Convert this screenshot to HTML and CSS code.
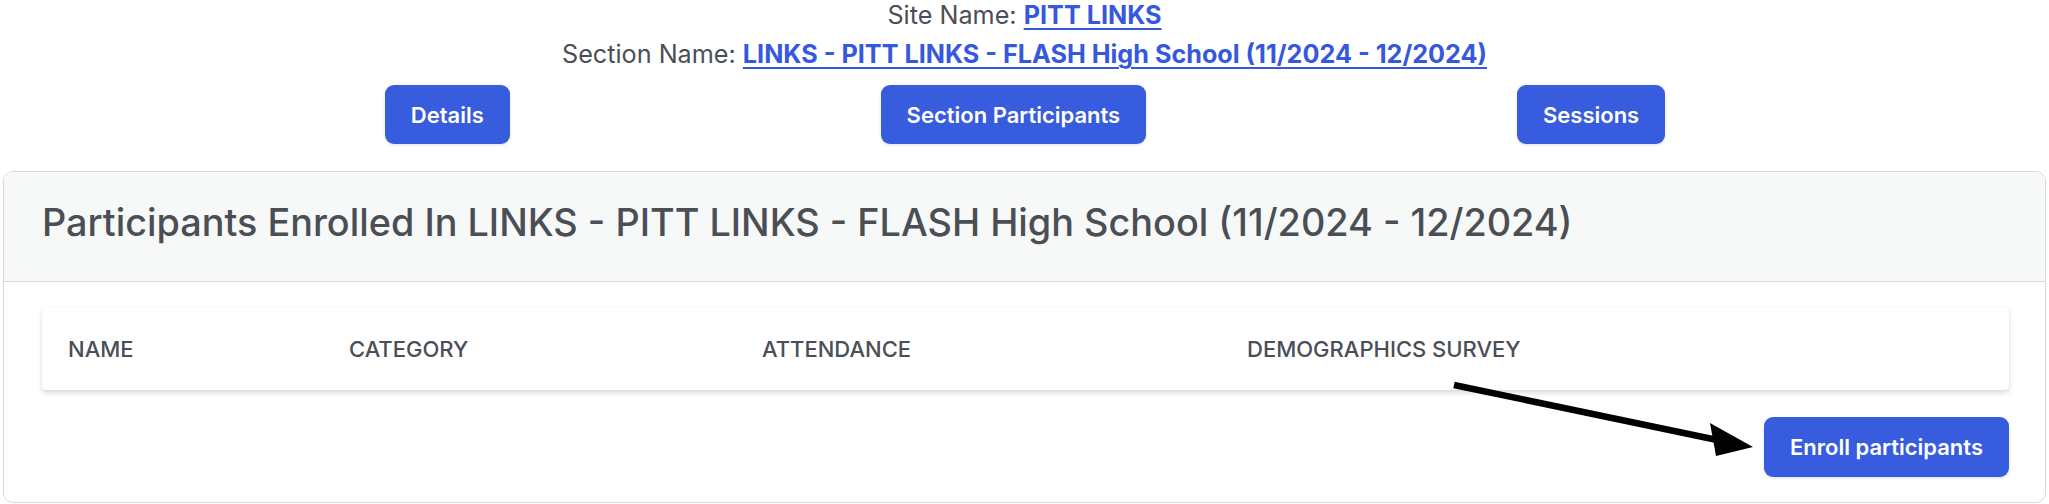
FILE: index.html
```html
<!DOCTYPE html>
<html lang="en">
<head>
<meta charset="utf-8">
<title>Participants Enrolled</title>
<link rel="stylesheet" href="styles.css">
</head>
<body>
<div class="page">
  <div class="meta">
    <p class="meta-line">Site Name: <a class="meta-link" href="#">PITT LINKS</a></p>
    <p class="meta-line meta-line--second">Section Name: <a class="meta-link" href="#">LINKS - PITT LINKS - FLASH High School (11/2024 - 12/2024)</a></p>
  </div>
  <nav class="tabs">
    <button class="btn" type="button">Details</button>
    <button class="btn" type="button">Section Participants</button>
    <button class="btn" type="button">Sessions</button>
  </nav>
  <section class="card">
    <header class="card-header">
      <h1 class="card-title">Participants Enrolled In LINKS - PITT LINKS - FLASH High School (11/2024 - 12/2024)</h1>
    </header>
    <div class="card-body">
      <div class="table-wrap">
        <table class="table">
          <colgroup>
            <col class="col-name">
            <col class="col-category">
            <col class="col-attendance">
            <col class="col-survey">
          </colgroup>
          <thead>
            <tr>
              <th>Name</th>
              <th>Category</th>
              <th>Attendance</th>
              <th>Demographics Survey</th>
            </tr>
          </thead>
        </table>
      </div>
      <div class="actions">
        <button class="btn btn--tall" type="button">Enroll participants</button>
      </div>
    </div>
  </section>
  <svg class="annotation" width="2049" height="504" viewBox="0 0 2049 504" aria-hidden="true">
    <line x1="1454" y1="385" x2="1722" y2="441" stroke="#000" stroke-width="6.5" stroke-linecap="butt"/>
    <polygon points="1753,447 1710,423 1716,456" fill="#000"/>
  </svg>
</div>
</body>
</html>
```

FILE: styles.css
```css
* {
  box-sizing: border-box;
}

html, body {
  margin: 0;
  padding: 0;
  background: #ffffff;
}

body {
  font-family: Inter, "Noto Sans", "Liberation Sans", sans-serif;
  color: #4a4f57;
}

.page {
  position: relative;
  width: 2049px;
  height: 504px;
  padding: 0 3px;
  overflow: hidden;
}

.meta {
  display: flex;
  flex-direction: column;
  align-items: center;
  gap: 9px;
}

.meta-line {
  margin: 0;
  font-size: 25.2px;
  line-height: 30px;
  color: #4a4f57;
  white-space: nowrap;
}

.meta-link {
  color: #3558dc;
  font-weight: 700;
  text-decoration: underline;
  text-decoration-thickness: 2px;
  text-underline-offset: 4px;
}

.tabs {
  display: flex;
  justify-content: space-evenly;
  padding: 16px 10px 0 11px;
}

.btn {
  display: inline-flex;
  align-items: center;
  justify-content: center;
  height: 59px;
  padding: 0 26px;
  border: none;
  border-radius: 9px;
  background: #375cdd;
  color: #ffffff;
  font-family: Inter, "Noto Sans", "Liberation Sans", sans-serif;
  font-size: 22px;
  font-weight: 600;
  box-shadow: 0 1px 3px rgba(0, 0, 0, 0.12);
  cursor: pointer;
}

.btn--tall {
  height: 60px;
}

.card {
  margin-top: 27px;
  border: 1.5px solid #d6d9dc;
  border-radius: 10px;
  overflow: hidden;
  background: #ffffff;
}

.card-header {
  height: 110px;
  display: flex;
  align-items: center;
  padding: 0 38px 9px;
  background: #f7f8f8;
  border-bottom: 1.5px solid #d6d9dc;
}

.card-title {
  margin: 0;
  font-size: 37.8px;
  font-weight: 500;
  color: #4a4f55;
  white-space: nowrap;
}

.card-body {
  padding: 25px 36px 25px 38px;
  display: flex;
  flex-direction: column;
  gap: 27px;
}

.table-wrap {
  border-radius: 4px;
  background: #ffffff;
  box-shadow: 0 3px 5px rgba(0, 0, 0, 0.14), 0 0 2px rgba(0, 0, 0, 0.06);
}

.table {
  width: 100%;
  border-collapse: collapse;
  table-layout: fixed;
}

.col-name { width: 281px; }
.col-category { width: 413px; }
.col-attendance { width: 485px; }

.table th {
  height: 83px;
  padding: 0 26px;
  text-align: left;
  font-size: 22px;
  font-weight: 500;
  text-transform: uppercase;
  color: #4a4f57;
  white-space: nowrap;
}

.actions {
  display: flex;
  justify-content: flex-end;
}

.annotation {
  position: absolute;
  left: 0;
  top: 0;
  pointer-events: none;
}
```
